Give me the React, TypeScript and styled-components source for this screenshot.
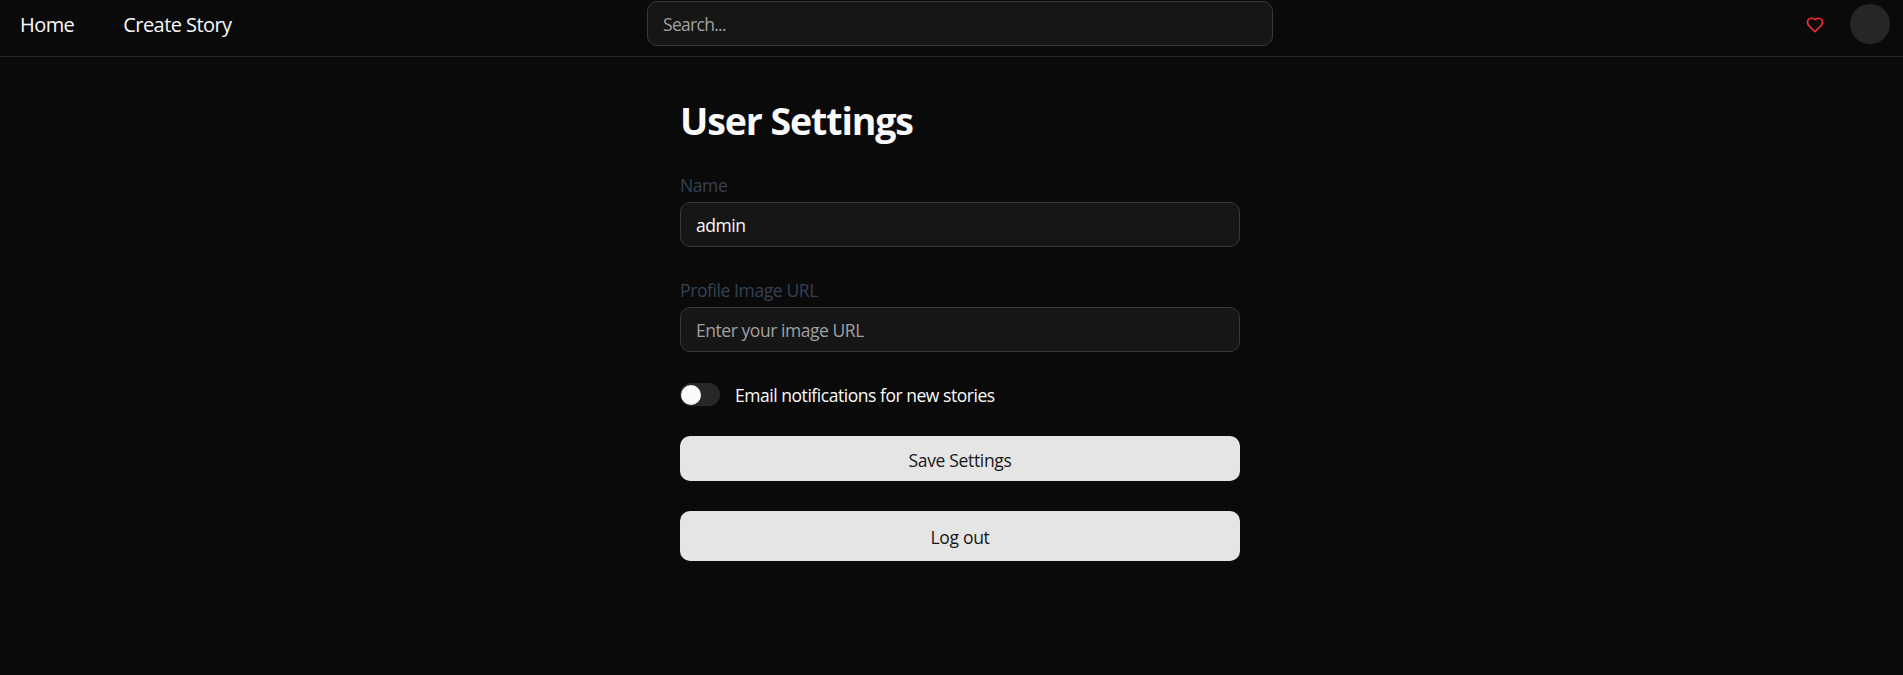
import React from 'react';
import styled, { createGlobalStyle } from 'styled-components';

const GlobalStyle = createGlobalStyle`
  *, *::before, *::after { box-sizing: border-box; }
  body {
    margin: 0;
    min-height: 100vh;
    background: #0a0a0a;
    color: #fafafa;
    font-family: "Segoe UI", "Open Sans", "Noto Sans", sans-serif;
    font-size: 17.5px;
  }
`;

const Header = styled.header`
  display: grid;
  grid-template-columns: 627px 626px 1fr;
  height: 57px;
  padding: 1px 13px 0 20px;
  border-bottom: 1px solid #262626;
`;

const Nav = styled.nav`
  display: flex;
  gap: 49px;
  height: 47px;
  align-items: center;
`;

const NavLink = styled.a`
  color: #fafafa;
  font-size: 20px;
  line-height: 30px;
  letter-spacing: -0.56px;
  text-decoration: none;
`;

const Input = styled.input`
  display: block;
  width: 100%;
  height: 45px;
  padding: 1px 15px 0;
  border: 1px solid #393939;
  border-radius: 10px;
  outline: none;
  background: #161616;
  color: #fafafa;
  font: inherit;
  letter-spacing: -0.45px;

  &::placeholder {
    color: #a1a1a1;
    opacity: 1;
  }
`;

const SearchInput = styled(Input)`
  letter-spacing: -0.7px;
`;

const Actions = styled.div`
  display: flex;
  justify-content: flex-end;
  align-items: center;
  gap: 26px;
  height: 46px;
`;

const HeartSvg = styled.svg`
  display: block;
  width: 18px;
  height: 18px;
  margin-top: 1px;
  fill: none;
  stroke: #fb2c36;
  stroke-width: 2.3;
  stroke-linecap: round;
  stroke-linejoin: round;
`;

const Avatar = styled.div`
  width: 40px;
  height: 40px;
  border-radius: 50%;
  background: #262626;
`;

const Main = styled.main`
  display: flex;
  flex-direction: column;
  align-items: center;
  padding: 39px 0 0 17px;
`;

const Title = styled.h1`
  width: 560px;
  margin: 0 0 32px;
  font-size: 37.5px;
  line-height: 49px;
  font-weight: 700;
  letter-spacing: -1.1px;
`;

const Form = styled.form`
  display: flex;
  flex-direction: column;
  width: 560px;
`;

const Field = styled.div`
  height: 105px;
`;

const Label = styled.label`
  display: block;
  height: 25px;
  line-height: 16px;
  color: #364153;
  letter-spacing: -0.4px;
`;

const SwitchRow = styled.div`
  display: flex;
  align-items: center;
  gap: 15px;
  height: 23px;
  margin-top: -4px;
`;

const Switch = styled.button`
  display: flex;
  align-items: center;
  width: 40px;
  height: 23px;
  padding: 0 1px;
  border: 0;
  border-radius: 12px;
  background: #282828;
`;

const Knob = styled.span`
  width: 20px;
  height: 20px;
  border-radius: 50%;
  background: #fafafa;
`;

const SwitchLabel = styled.span`
  letter-spacing: -0.46px;
  line-height: 24px;
  padding-top: 1px;
`;

const Button = styled.button<{ $height: number }>`
  height: ${({ $height }) => $height}px;
  margin-top: 30px;
  padding: 2px 0 0;
  border: 0;
  border-radius: 10px;
  background: #e5e5e5;
  color: #171717;
  font: inherit;
  letter-spacing: -0.33px;
`;

function HeartIcon() {
  return (
    <HeartSvg viewBox="0 0 24 24" overflow="visible">
      <path d="M19 14c1.49-1.46 3-3.21 3-5.5A5.5 5.5 0 0 0 16.5 3c-1.76 0-3 .5-4.5 2-1.5-1.5-2.74-2-4.5-2A5.5 5.5 0 0 0 2 8.5c0 2.3 1.5 4.05 3 5.5l7 7Z" />
    </HeartSvg>
  );
}

export default function App() {
  return (
    <>
      <GlobalStyle />
      <Header>
        <Nav>
          <NavLink>Home</NavLink>
          <NavLink>Create Story</NavLink>
        </Nav>
        <SearchInput placeholder="Search..." />
        <Actions>
          <HeartIcon />
          <Avatar />
        </Actions>
      </Header>
      <Main>
        <Title>User Settings</Title>
        <Form>
          <Field>
            <Label htmlFor="name">Name</Label>
            <Input id="name" defaultValue="admin" />
          </Field>
          <Field>
            <Label htmlFor="image">Profile Image URL</Label>
            <Input id="image" placeholder="Enter your image URL" />
          </Field>
          <SwitchRow>
            <Switch type="button" role="switch" aria-checked={false}>
              <Knob />
            </Switch>
            <SwitchLabel>Email notifications for new stories</SwitchLabel>
          </SwitchRow>
          <Button type="button" $height={45}>Save Settings</Button>
          <Button type="button" $height={50}>Log out</Button>
        </Form>
      </Main>
    </>
  );
}
